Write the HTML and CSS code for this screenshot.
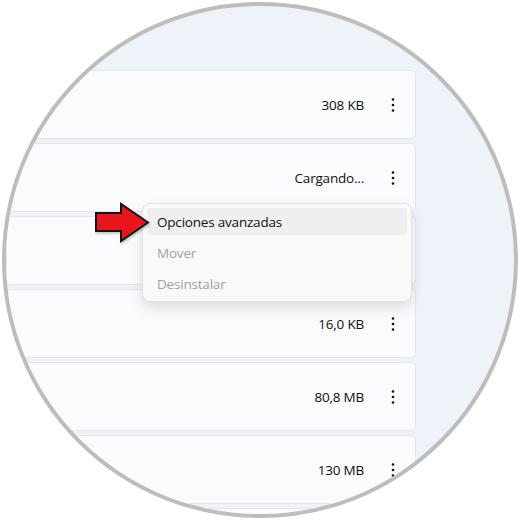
FILE: index.html
```html
<!DOCTYPE html>
<html lang="es">
<head>
<meta charset="utf-8">
<title>Aplicaciones</title>
<link rel="stylesheet" href="styles.css">
</head>
<body>
<div class="lens">
  <div class="list">
    <div class="card"><span class="size">308 KB</span><span class="more"><svg viewBox="0 0 4 16" width="4" height="16"><circle cx="2" cy="2.5" r="1.3"/><circle cx="2" cy="8" r="1.3"/><circle cx="2" cy="13.5" r="1.3"/></svg></span></div>
    <div class="card"><span class="size">Cargando...</span><span class="more"><svg viewBox="0 0 4 16" width="4" height="16"><circle cx="2" cy="2.5" r="1.3"/><circle cx="2" cy="8" r="1.3"/><circle cx="2" cy="13.5" r="1.3"/></svg></span></div>
    <div class="card"></div>
    <div class="card"><span class="size">16,0 KB</span><span class="more"><svg viewBox="0 0 4 16" width="4" height="16"><circle cx="2" cy="2.5" r="1.3"/><circle cx="2" cy="8" r="1.3"/><circle cx="2" cy="13.5" r="1.3"/></svg></span></div>
    <div class="card"><span class="size">80,8 MB</span><span class="more"><svg viewBox="0 0 4 16" width="4" height="16"><circle cx="2" cy="2.5" r="1.3"/><circle cx="2" cy="8" r="1.3"/><circle cx="2" cy="13.5" r="1.3"/></svg></span></div>
    <div class="card"><span class="size">130 MB</span><span class="more"><svg viewBox="0 0 4 16" width="4" height="16"><circle cx="2" cy="2.5" r="1.3"/><circle cx="2" cy="8" r="1.3"/><circle cx="2" cy="13.5" r="1.3"/></svg></span></div>
    <div class="card"></div>
  </div>
  <div class="menu">
    <div class="item active">Opciones avanzadas</div>
    <div class="item disabled">Mover</div>
    <div class="item disabled">Desinstalar</div>
  </div>
  <svg class="arrow" viewBox="0 0 60 46" width="60" height="46">
    <polygon points="4,13 29,13 29,4 56,22.5 29,41 29,31 4,31" fill="#e8161c" stroke="#151515" stroke-width="2" stroke-linejoin="miter"/>
  </svg>
</div>
</body>
</html>
```
FILE: styles.css
```css
html, body {
  margin: 0;
  padding: 0;
  background: #ffffff;
}
body {
  width: 520px;
  height: 520px;
  font-family: "Open Sans", "Noto Sans", sans-serif;
}
.lens {
  position: relative;
  box-sizing: border-box;
  width: 516px;
  height: 516px;
  margin: 2px;
  border: 4px solid #bdbdbd;
  border-radius: 50%;
  overflow: hidden;
  background: #eef3f9;
}
.list {
  display: flex;
  flex-direction: column;
  gap: 4px;
  width: 410px;
  padding-top: 64px;
}
.card {
  flex: none;
  box-sizing: border-box;
  height: 69px;
  display: flex;
  align-items: center;
  justify-content: flex-end;
  gap: 27px;
  padding-right: 20px;
  background: #f9fbfd;
  border: 1px solid #e3e7ed;
  border-radius: 5px;
}
.size {
  font-size: 13.5px;
  color: #111111;
  letter-spacing: -0.2px;
}
.more {
  display: flex;
  width: 4px;
  height: 16px;
  fill: #111111;
}
.menu {
  position: absolute;
  left: 136px;
  top: 197px;
  box-sizing: border-box;
  width: 270px;
  height: 99px;
  padding: 4px;
  display: flex;
  flex-direction: column;
  gap: 4px;
  background: #f9f9f9;
  border: 1px solid #e2e2e2;
  border-radius: 8px;
  box-shadow: 0 6px 14px rgba(0, 0, 0, 0.12);
}
.item {
  height: 28px;
  display: flex;
  align-items: center;
  padding-left: 10px;
  font-size: 13.5px;
  letter-spacing: -0.2px;
  border-radius: 4px;
  color: #111111;
}
.item.active {
  background: #efefef;
}
.item.disabled {
  color: #a2a2a2;
}
.arrow {
  position: absolute;
  left: 86px;
  top: 194px;
  filter: drop-shadow(1px 2px 1px rgba(0, 0, 0, 0.2));
}
```
